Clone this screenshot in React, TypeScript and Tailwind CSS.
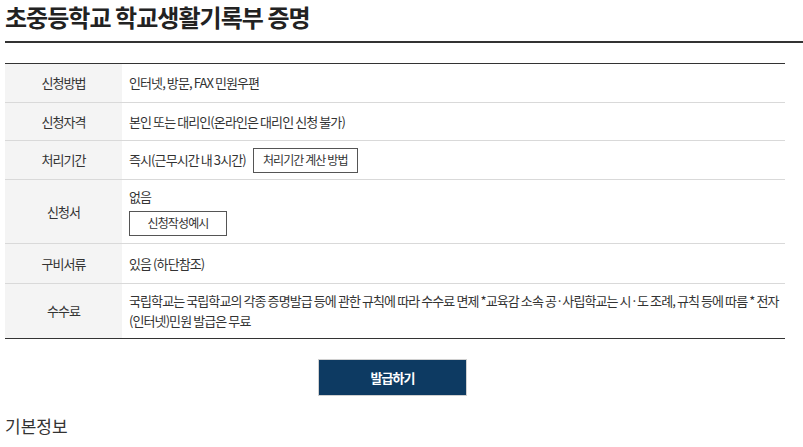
function Row({
  label,
  children,
  className,
}: {
  label: string;
  children: React.ReactNode;
  className: string;
}) {
  return (
    <div className={`grid grid-cols-[117px_1fr] border-b border-[#d9d9d9] last:border-b-0 ${className}`}>
      <div className="flex items-center justify-center bg-[#f4f4f4] text-[#333]">{label}</div>
      <div className="flex flex-col justify-center pl-[7px] text-[#333]">{children}</div>
    </div>
  );
}

function OutlineButton({ children, className }: { children: React.ReactNode; className: string }) {
  return (
    <button
      type="button"
      className={`flex h-[25px] items-center justify-center border border-[#555] bg-white text-[12px] text-[#333] ${className}`}
    >
      {children}
    </button>
  );
}

export default function App() {
  return (
    <div
      className="min-h-[447px] bg-white pl-[5px] text-[13px] tracking-[-0.07em] break-keep"
      style={{ fontFamily: '"Noto Sans CJK KR", "Noto Sans", sans-serif' }}
    >
      <h2 className="h-[43px] border-b-2 border-[#333] pt-[1px] text-[24px] font-bold leading-[32px] tracking-[-0.04em] text-[#222]">
        초중등학교 학교생활기록부 증명
      </h2>

      <div className="mt-[20px] w-[780px] border-y border-[#333]">
        <Row label="신청방법" className="h-[39px]">
          인터넷, 방문, FAX 민원우편
        </Row>
        <Row label="신청자격" className="h-[38px]">
          본인 또는 대리인(온라인은 대리인 신청 불가)
        </Row>
        <Row label="처리기간" className="h-[39px]">
          <div className="flex items-center gap-[7px]">
            <span>즉시(근무시간 내 3시간)</span>
            <OutlineButton className="w-[105px]">처리기간 계산 방법</OutlineButton>
          </div>
        </Row>
        <Row label="신청서" className="h-[64px]">
          <span className="leading-[18px]">없음</span>
          <OutlineButton className="mt-[5px] w-[98px]">신청작성예시</OutlineButton>
        </Row>
        <Row label="구비서류" className="h-[40px]">
          있음 (하단참조)
        </Row>
        <Row label="수수료" className="h-[54px]">
          <p className="whitespace-nowrap leading-[20px]">
            국립학교는 국립학교의 각종 증명발급 등에 관한 규칙에 따라 수수료 면제 *교육감 소속 공·사립학교는 시·도 조례, 규칙 등에 따름 * 전자
            <br />
            (인터넷)민원 발급은 무료
          </p>
        </Row>
      </div>

      <div className="flex w-[775px] justify-center pt-[20px]">
        <button
          type="button"
          className="h-[37px] w-[149px] border border-[#d0d0d0] bg-[#0d3a62] text-[13px] font-bold text-white"
        >
          발급하기
        </button>
      </div>

      <h3 className="mt-[19px] text-[17px] leading-[22px] tracking-normal text-[#333]">기본정보</h3>
    </div>
  );
}
